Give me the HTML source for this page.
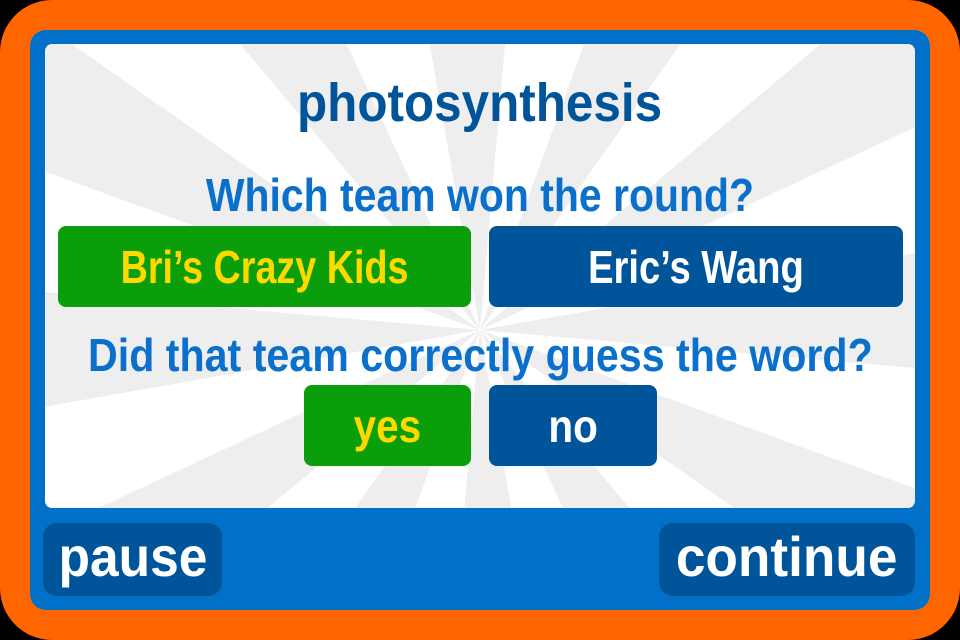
<!DOCTYPE html>
<html><head><meta charset="utf-8"><style>
*{margin:0;padding:0;box-sizing:border-box}
body{width:960px;height:640px;background:#000;overflow:hidden;position:relative;font-family:"Liberation Sans",sans-serif;font-weight:bold}
.abs{position:absolute}
.orange{left:0;top:0;width:960px;height:640px;background:#ff6600;border-radius:52px}
.blue{left:30px;top:30px;width:900px;height:580px;background:#0070c9;border-radius:16px}
.white{left:45px;top:44px;width:870px;height:464px;border-radius:7px;overflow:hidden;
background:repeating-conic-gradient(from 5deg at 435px 286px,#fff 0deg 15deg,#eeeeee 15deg 30deg)}
.t{position:absolute;left:0;width:960px;text-align:center;white-space:nowrap}
.t span{display:inline-block}
.btn{position:absolute;border-radius:8px;display:flex;align-items:center;justify-content:center;white-space:nowrap}
.btn span{display:inline-block;transform:scaleX(0.83)}
.g{background:#0a9e0a;color:#ffd800}
.b{background:#00559a;color:#fff}
</style></head><body>
<div class="abs orange"></div>
<div class="abs blue"></div>
<div class="abs white"></div>
<div class="t" style="top:72px;font-size:54px;color:#00559a"><span style="transform:scaleX(0.915)">photosynthesis</span></div>
<div class="t" style="top:168px;font-size:46px;color:#0a70cc"><span style="transform:scaleX(0.89)">Which team won the round?</span></div>
<div class="btn g" style="left:58px;top:226px;width:413px;height:81px;font-size:46px"><span style="transform:scaleX(0.82)">Bri’s Crazy Kids</span></div>
<div class="btn b" style="left:489px;top:226px;width:414px;height:81px;font-size:46px"><span>Eric’s Wang</span></div>
<div class="t" style="top:328px;font-size:46px;color:#0a70cc"><span style="transform:scaleX(0.895)">Did that team correctly guess the word?</span></div>
<div class="btn g" style="left:304px;top:385px;width:167px;height:81px;font-size:46px"><span style="transform:scaleX(0.88)">yes</span></div>
<div class="btn b" style="left:489px;top:385px;width:168px;height:81px;font-size:46px"><span style="transform:scaleX(0.88)">no</span></div>
<div class="btn b" style="left:43px;top:523px;width:179px;height:73px;border-radius:14px;font-size:56px;padding-bottom:6px"><span style="transform:scaleX(0.92)">pause</span></div>
<div class="btn b" style="left:659px;top:523px;width:256px;height:73px;border-radius:14px;font-size:56px;padding-bottom:6px"><span style="transform:scaleX(0.95)">continue</span></div>
</body></html>
